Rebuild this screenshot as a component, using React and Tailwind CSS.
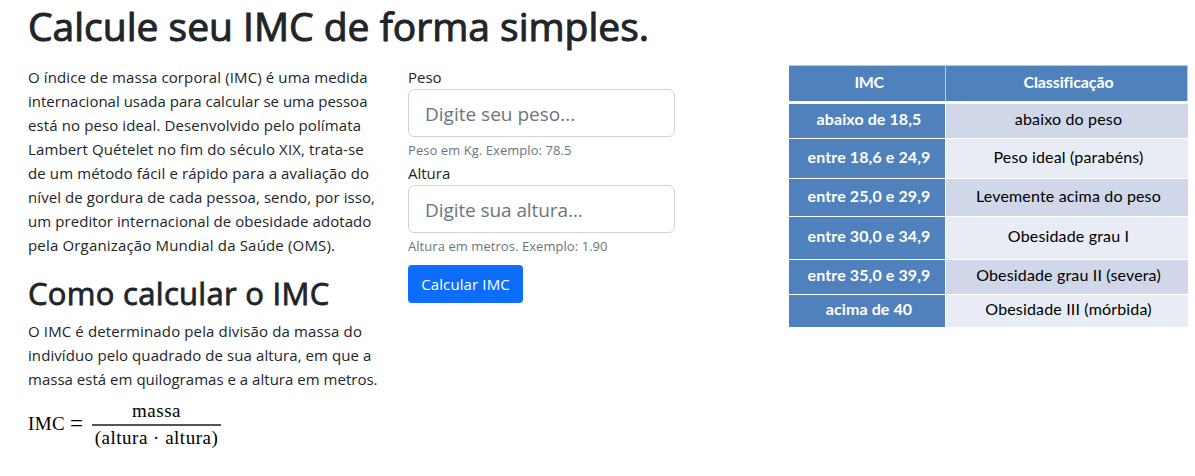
const intro = [
  { text: "O índice de massa corporal (IMC) é uma medida", cls: "tracking-[0.12px]" },
  { text: "internacional usada para calcular se uma pessoa", cls: "tracking-normal" },
  { text: "está no peso ideal. Desenvolvido pelo polímata", cls: "tracking-[0.11px]" },
  { text: "Lambert Quételet no fim do século XIX, trata-se", cls: "tracking-[0.12px]" },
  { text: "de um método fácil e rápido para a avaliação do", cls: "tracking-[0.11px]" },
  { text: "nível de gordura de cada pessoa, sendo, por isso,", cls: "tracking-[0.07px]" },
  { text: "um preditor internacional de obesidade adotado", cls: "tracking-[0.07px]" },
  { text: "pela Organização Mundial da Saúde (OMS).", cls: "tracking-[0.17px]" },
];

const how = [
  { text: "O IMC é determinado pela divisão da massa do", cls: "tracking-[0.13px]" },
  { text: "indivíduo pelo quadrado de sua altura, em que a", cls: "tracking-[0.085px]" },
  { text: "massa está em quilogramas e a altura em metros.", cls: "tracking-[0.02px]" },
];

const rows = [
  ["abaixo de 18,5", "abaixo do peso", "h-[34px]", "bg-[#d0d7e8]"],
  ["entre 18,6 e 24,9", "Peso ideal (parabéns)", "h-[39px]", "bg-[#e8edf5]"],
  ["entre 25,0 e 29,9", "Levemente acima do peso", "h-[37px]", "bg-[#d0d7e8]"],
  ["entre 30,0 e 34,9", "Obesidade grau I", "h-[42px]", "bg-[#e8edf5]"],
  ["entre 35,0 e 39,9", "Obesidade grau II (severa)", "h-[34px]", "bg-[#d0d7e8]"],
  ["acima de 40", "Obesidade III (mórbida)", "h-[32px]", "bg-[#e8edf5]"],
];

function Lines({ items }) {
  return items.map((l) => (
    <span key={l.text} className={`block whitespace-nowrap ${l.cls}`}>{l.text}</span>
  ));
}

function Field({ label, placeholder, hint, tracking }) {
  return (
    <div>
      <label className="block h-6">{label}</label>
      <input
        placeholder={placeholder}
        className={`block h-12 w-[267px] rounded-md border border-[#ced4da] px-4 pt-[2px] text-[19px] placeholder:text-[#6c757d] ${tracking}`}
      />
      <small className="block h-6 pt-px text-[13px] tracking-[0.06px] text-[#6c757d]">{hint}</small>
    </div>
  );
}

function Formula() {
  return (
    <div className="flex items-start pt-[9px] font-['Liberation_Serif',serif] text-[19px] leading-[22px] text-black">
      <span className="mt-[13px] w-[42px] tracking-[0.4px]">IMC</span>
      <span className="mt-[13px] w-[22px] text-[23px]">=</span>
      <span className="flex w-[129px] flex-col items-center tracking-[0.5px] whitespace-nowrap">
        <span>massa</span>
        <span className="mt-[2px] mb-px h-[1.5px] w-full bg-[#555]" />
        <span>(altura · altura)</span>
      </span>
    </div>
  );
}

function ImcTable() {
  return (
    <section className="flex w-[400px] shrink-0 flex-col gap-px pl-px font-[Lato,sans-serif] text-base">
      <div className="mb-0.5 flex h-9 gap-px border-t border-r border-[#b9cce4] bg-[#b9cce4] font-bold text-white">
        <div className="flex w-[156px] items-center justify-center bg-[#4f81bd] pb-[3px] pl-1 tracking-[-0.4px]">IMC</div>
        <div className="flex flex-1 items-center justify-center bg-[#4f81bd] pb-[3px] pl-1 tracking-[-0.1px]">Classificação</div>
      </div>
      {rows.map(([range, label, height, bg]) => (
        <div key={range} className={`flex gap-px ${height}`}>
          <div className="flex w-[156px] items-center justify-center bg-[#4f81bd] pb-1 pl-1 font-bold tracking-[0.1px] text-white">{range}</div>
          <div className={`flex flex-1 items-center justify-center pb-1 pl-[3px] tracking-[0.16px] text-black ${bg}`}>{label}</div>
        </div>
      ))}
    </section>
  );
}

export default function App() {
  return (
    <div className="h-[476px] overflow-hidden bg-white px-7 font-['Open_Sans','Noto_Sans',sans-serif] text-[15px] leading-6 text-[#212529]">
      <h1 className="h-[65px] pt-[2px] text-[39px] leading-[48px] font-normal whitespace-nowrap [-webkit-text-stroke:1px_#212529]">
        Calcule seu IMC de forma simples.
      </h1>
      <div className="flex">
        <section className="w-[380px] shrink-0">
          <p><Lines items={intro} /></p>
          <h2 className="mt-[17px] mb-[7px] text-[31px] leading-[38px] font-normal tracking-[0.3px] whitespace-nowrap [-webkit-text-stroke:0.8px_#212529]">
            Como calcular o IMC
          </h2>
          <p><Lines items={how} /></p>
          <Formula />
        </section>
        <form className="w-[380px] shrink-0">
          <Field label="Peso" placeholder="Digite seu peso..." hint="Peso em Kg. Exemplo: 78.5" tracking="tracking-normal" />
          <Field label="Altura" placeholder="Digite sua altura..." hint="Altura em metros. Exemplo: 1.90" tracking="tracking-[-0.08px]" />
          <button type="button" className="mt-2 h-[38px] w-[115px] rounded bg-[#0d6efd] tracking-[0.12px] text-white">
            Calcular IMC
          </button>
        </form>
        <ImcTable />
      </div>
    </div>
  );
}
